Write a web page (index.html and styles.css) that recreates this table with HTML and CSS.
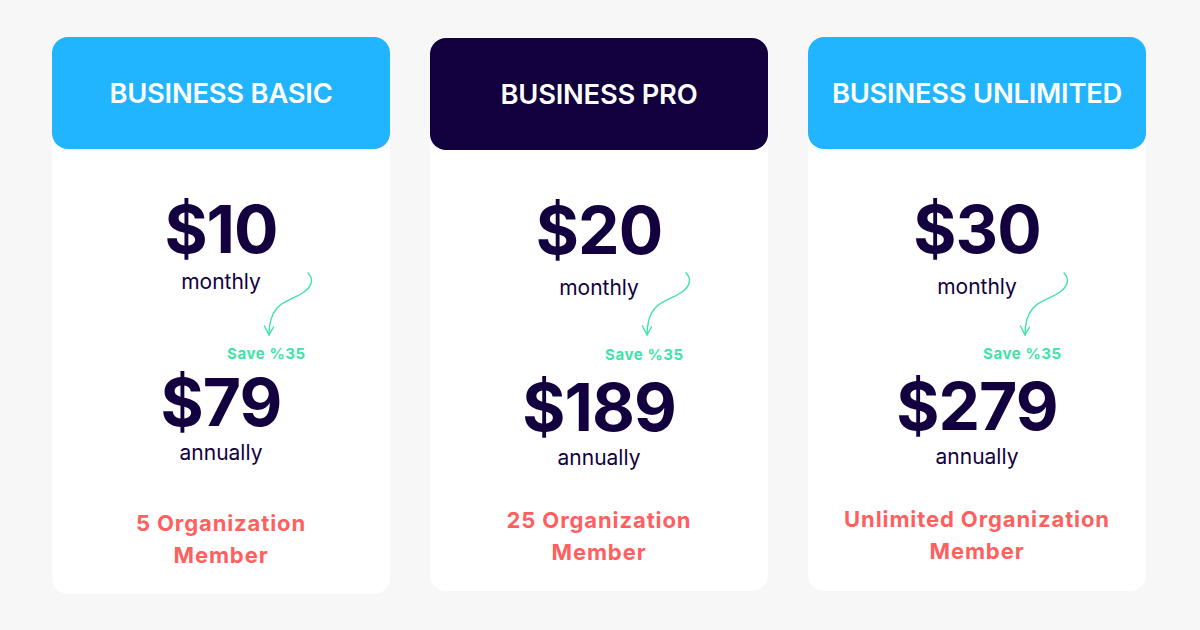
FILE: index.html
```html
<!DOCTYPE html>
<html lang="en">
<head>
<meta charset="utf-8">
<title>Business Plans</title>
<link rel="stylesheet" href="styles.css">
</head>
<body>
<main class="plans">
  <section class="card card--basic">
    <header class="card-head">BUSINESS BASIC</header>
    <div class="price">$10</div>
    <div class="period period--monthly">monthly</div>
    <svg class="arrow" viewBox="0 0 56 66" width="56" height="66" fill="none" stroke="#3fe3a8" stroke-width="1.4" stroke-linecap="round" stroke-linejoin="round">
      <path d="M46 1 C52 7 50 14 42 20 C34 26 22 28 15 36 C9 43 7 52 7 63"/>
      <path d="M2.5 54 L7 63 L11.5 55"/>
    </svg>
    <div class="save">Save %35</div>
    <div class="price price--annual">$79</div>
    <div class="period period--annual">annually</div>
    <p class="members">5 Organization<br>Member</p>
  </section>
  <section class="card card--pro">
    <header class="card-head card-head--dark">BUSINESS PRO</header>
    <div class="price">$20</div>
    <div class="period period--monthly">monthly</div>
    <svg class="arrow" viewBox="0 0 56 66" width="56" height="66" fill="none" stroke="#3fe3a8" stroke-width="1.4" stroke-linecap="round" stroke-linejoin="round">
      <path d="M46 1 C52 7 50 14 42 20 C34 26 22 28 15 36 C9 43 7 52 7 63"/>
      <path d="M2.5 54 L7 63 L11.5 55"/>
    </svg>
    <div class="save">Save %35</div>
    <div class="price price--annual">$189</div>
    <div class="period period--annual">annually</div>
    <p class="members">25 Organization<br>Member</p>
  </section>
  <section class="card card--unlimited">
    <header class="card-head">BUSINESS UNLIMITED</header>
    <div class="price">$30</div>
    <div class="period period--monthly">monthly</div>
    <svg class="arrow" viewBox="0 0 56 66" width="56" height="66" fill="none" stroke="#3fe3a8" stroke-width="1.4" stroke-linecap="round" stroke-linejoin="round">
      <path d="M46 1 C52 7 50 14 42 20 C34 26 22 28 15 36 C9 43 7 52 7 63"/>
      <path d="M2.5 54 L7 63 L11.5 55"/>
    </svg>
    <div class="save">Save %35</div>
    <div class="price price--annual">$279</div>
    <div class="period period--annual">annually</div>
    <p class="members">Unlimited Organization<br>Member</p>
  </section>
</main>
</body>
</html>
```
FILE: styles.css
```css
* { box-sizing: border-box; }
html, body {
  margin: 0;
  padding: 0;
  width: 1200px;
  height: 630px;
  background: #f7f7f7;
  font-family: Inter, "Noto Sans", sans-serif;
  color: #12003f;
  overflow: hidden;
}
.plans {
  display: flex;
  align-items: flex-start;
  gap: 40px;
  padding: 37px 0 0 52px;
}
.card {
  position: relative;
  width: 338px;
  height: 554px;
  background: #ffffff;
  border-radius: 16px;
  display: flex;
  flex-direction: column;
  align-items: center;
}
.card--basic { height: 557px; }
.card-head {
  width: 100%;
  height: 112px;
  border-radius: 16px;
  background: #21b5ff;
  color: #ffffff;
  display: flex;
  align-items: center;
  justify-content: center;
  font-size: 27.3px;
  font-weight: 600;
  letter-spacing: -0.2px;
}
.card-head--dark {
  background: #11003d;
  margin-top: 1px;
}
.price {
  margin-top: 47px;
  font-size: 66px;
  line-height: 66px;
  font-weight: 700;
  letter-spacing: -1px;
}
.price--annual { margin-top: 10px; }
.card--basic .price--annual { margin-top: 6px; }
.period {
  font-size: 21px;
  line-height: 24px;
  font-weight: 400;
}
.period--monthly { margin-top: 13px; }
.card--basic .period--monthly { margin-top: 8px; }
.period--annual { margin-top: 6px; }
.card--basic .period--annual { margin-top: 6px; }
.arrow {
  position: absolute;
  left: 210px;
  top: 235px;
}
.save {
  align-self: flex-start;
  margin-top: 46px;
  margin-left: 175px;
  font-size: 15px;
  line-height: 18px;
  font-weight: 700;
  letter-spacing: 0.6px;
  color: #3fe3a8;
}
.card--basic .save { margin-top: 51px; }
.members {
  margin: 34px 0 0;
  text-align: center;
  font-size: 22px;
  line-height: 32px;
  font-weight: 700;
  letter-spacing: 0.9px;
  color: #ff5f5f;
}
.card--basic .members { margin-top: 42px; }
```
